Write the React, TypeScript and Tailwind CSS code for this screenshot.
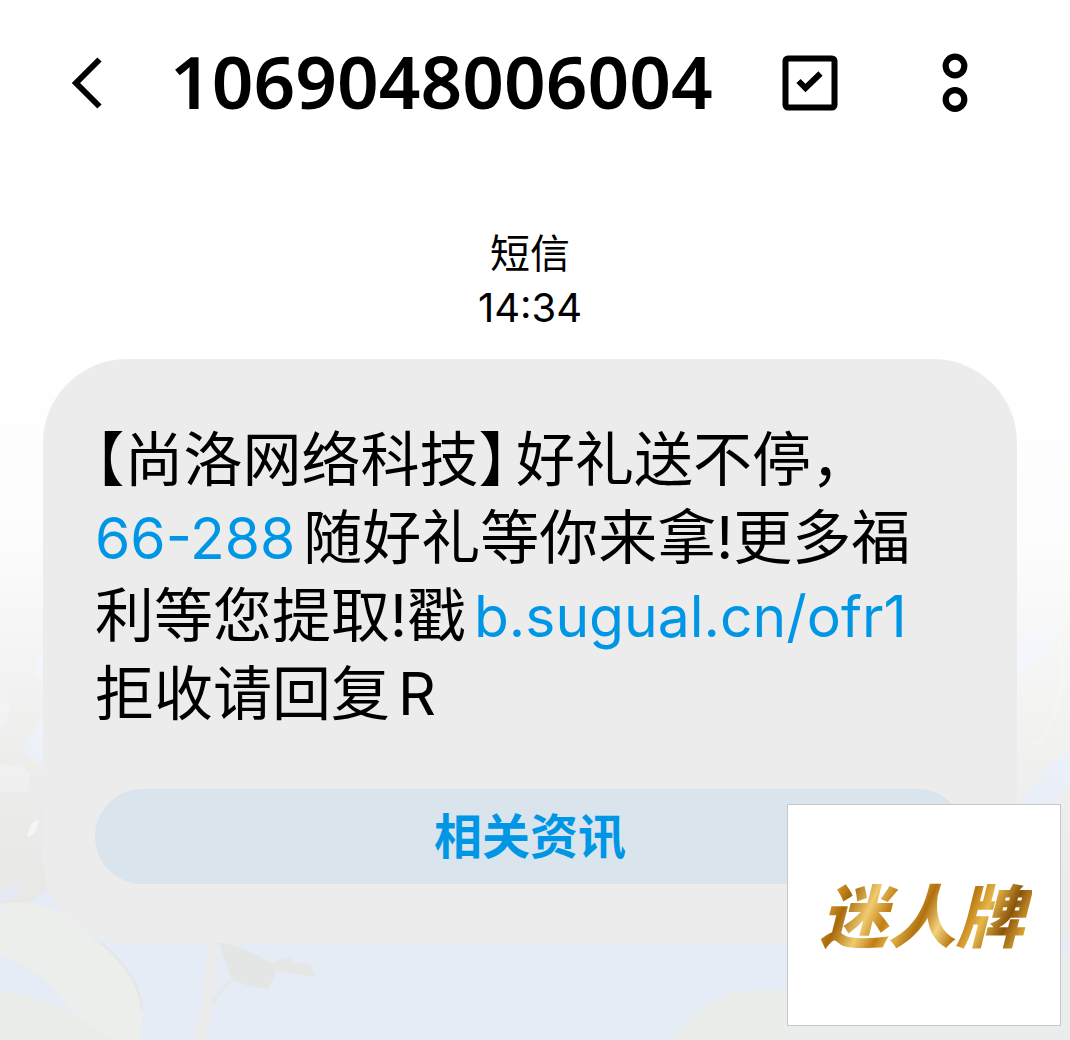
import { useState } from 'react';

const SENDER = '1069048006004';

function BackIcon() {
  return (
    <svg viewBox="0 0 32 52" className="h-[52px] w-8" fill="none" stroke="#000" strokeWidth="6">
      <path d="M28.500 2.500 L5 26 L28.500 49.500" />
    </svg>
  );
}

function SelectIcon() {
  return (
    <svg viewBox="0 0 56 56" className="size-14" fill="none" stroke="#000" strokeWidth="6">
      <rect x="3.500" y="3.500" width="49" height="49" rx="2.500" />
      <path d="M16.500 26 L23.500 33 L38.500 18.500" />
    </svg>
  );
}

function MoreIcon() {
  return (
    <svg viewBox="0 0 26 60" className="h-[60px] w-[26px]" fill="none" stroke="#000" strokeWidth="6.2">
      <circle cx="13" cy="13" r="9.300" />
      <circle cx="13" cy="46.500" r="9.300" />
    </svg>
  );
}

// Faded photo wallpaper: pale sky with out-of-focus leaves
function Wallpaper() {
  return (
    <svg
      aria-hidden="true"
      viewBox="0 0 1070 1040"
      preserveAspectRatio="xMidYMax slice"
      className="absolute inset-0 h-full w-full"
    >
      <defs>
        <linearGradient id="fade" x1="0" y1="0" x2="0" y2="1">
          <stop offset="0.340" stopColor="#fff" />
          <stop offset="0.520" stopColor="#fff" stopOpacity="0.880" />
          <stop offset="0.620" stopColor="#fff" stopOpacity="0.550" />
          <stop offset="0.740" stopColor="#fff" stopOpacity="0.200" />
          <stop offset="0.850" stopColor="#fff" stopOpacity="0" />
        </linearGradient>
      </defs>
      <rect width="1070" height="1040" fill="#e6ecf6" />
      <path d="M0 400 L60 400 L60 640 Q30 660 36 675 L44 690 L44 715 Q34 730 22 752 L46 768 L48 890 L28 903 L0 903Z" fill="#e8e8e7" />
      <path d="M0 695 L12 702 L6 725 L0 730Z" fill="#ebeceb" />
      <path d="M0 764 Q20 764 30 772 L28 792 L0 792Z" fill="#ecedec" />
      <path d="M27 837 Q30 820 39 820 Q36 836 27 837Z" fill="#f4f5f2" />
      <path d="M0 893 Q12 884 24 888 Q16 900 0 901Z" fill="#e3e9f5" />
      <path d="M0 904 Q60 896 96 942 Q140 970 143 1010 L140 1040 L84 1040 Q60 975 0 955Z" fill="#ebeeeb" />
      <path d="M0 990 Q60 1000 110 1040 L0 1040Z" fill="#e9ece9" />
      <path d="M100 942 Q140 975 142 1010" stroke="#e4e6e6" strokeWidth="2" fill="none" />
      <path d="M208 940 L219 940 L213 1007 L206 1040 L193 1040 L203 1000Z" fill="#ebebec" />
      <path d="M213 1003 Q230 970 275 967" stroke="#e5e7e8" strokeWidth="3" fill="none" />
      <path d="M219 943 Q240 943 278 968 L268 989 Q245 988 231 977Z" fill="#e4e6e6" />
      <path d="M268 966 Q290 952 293 962 L310 965 L316 977 L280 972Z" fill="#e5e7e5" />
      <path d="M670 1040 Q715 992 740 991 L800 988 L800 1040Z" fill="#ebedeb" />
      <path d="M1010 400 L1070 400 L1070 752 Q1045 765 1038 780 L1017 805Z" fill="#ececeb" />
      <path d="M1017 635 L1060 622 L1050 650 L1017 680Z" fill="#e8edf7" />
      <path d="M1060 640 Q1070 690 1042 740 L1030 746" stroke="#efefed" strokeWidth="3" fill="none" />
      <path d="M1017 825 L1050 805 L1070 785 L1070 940 L1017 940Z" fill="#ebebec" />
      <path d="M1056 960 L1070 950 L1070 1040 L780 1040 L788 1020Z" fill="#ebecec" />
      <rect width="1070" height="1040" fill="url(#fade)" />
    </svg>
  );
}

function PromoCard() {
  return (
    <aside className="absolute right-[9px] bottom-[14px] flex h-[222px] w-[274px] items-center justify-center border border-[#c8c8c8] bg-white pt-1 pr-1">
      <span className="bg-[linear-gradient(115deg,#a8690c_0%,#e2a62f_10%,#a8690c_18%,#f0cb70_28%,#c07e14_36%,#e9b84c_42%,#b0700e_50%,#f3d27c_58%,#b8780f_66%,#e9b84c_74%,#8a5509_84%,#d8a032_92%,#9a6209_100%)] bg-clip-text px-2 text-[68px] leading-[80px] font-black text-transparent italic">
        迷人牌
      </span>
    </aside>
  );
}

export default function App() {
  const [selecting, setSelecting] = useState(false);

  return (
    <div
      lang="zh-CN"
      className="relative min-h-screen overflow-hidden bg-white font-['Inter','Noto_Sans_CJK_SC',sans-serif] text-black"
    >
      <Wallpaper />

      <div className="relative pt-[43px]">
        {/* Header */}
        <header className="flex h-20 items-center pr-[102px] pl-[71px]">
          <button type="button" aria-label="返回">
            <BackIcon />
          </button>
          <h1 className="ml-[67px] pb-1 font-['Noto_Sans'] text-[73px] leading-[80px] font-semibold">{SENDER}</h1>
          <button
            type="button"
            aria-label="选择"
            aria-pressed={selecting}
            onClick={() => setSelecting(!selecting)}
            className="ml-auto"
          >
            <SelectIcon />
          </button>
          <button type="button" aria-label="更多" className="ml-[104px]">
            <MoreIcon />
          </button>
        </header>

        {/* Messages */}
        <main className="pr-[53px] pl-[43px]">
          <div className="mt-[104px] text-center text-[40px] leading-[54px]">
            <p>短信</p>
            <time dateTime="14:34" className="block">14:34</time>
          </div>

          <article className="mt-[24px] rounded-[84px] bg-[#ececec] px-[52px] pt-[62px] pb-[59px]">
            <p className="text-[59px] leading-[78px] [font-feature-settings:'halt']">
              【尚洛网络科技】<span className="ml-2">好礼送不停，</span>
              <br />
              <a href="tel:66288" className="mr-2 text-[57px] leading-none text-[#0096e6]">66-288</a>
              随好礼等你来拿!更多福
              <br />
              利等您提取!戳
              <a href="https://b.sugual.cn/ofr1" className="ml-2 text-[57px] leading-none text-[#0096e6]">b.sugual.cn/ofr1</a>
              <br />
              拒收请回复<span className="ml-2">R</span>
            </p>
            <button
              type="button"
              className="mt-[56px] h-[95px] w-full rounded-full bg-[#dae4ec] text-[48px] font-bold text-[#0096e6]"
            >
              相关资讯
            </button>
          </article>
        </main>
      </div>

      <PromoCard />
    </div>
  );
}
